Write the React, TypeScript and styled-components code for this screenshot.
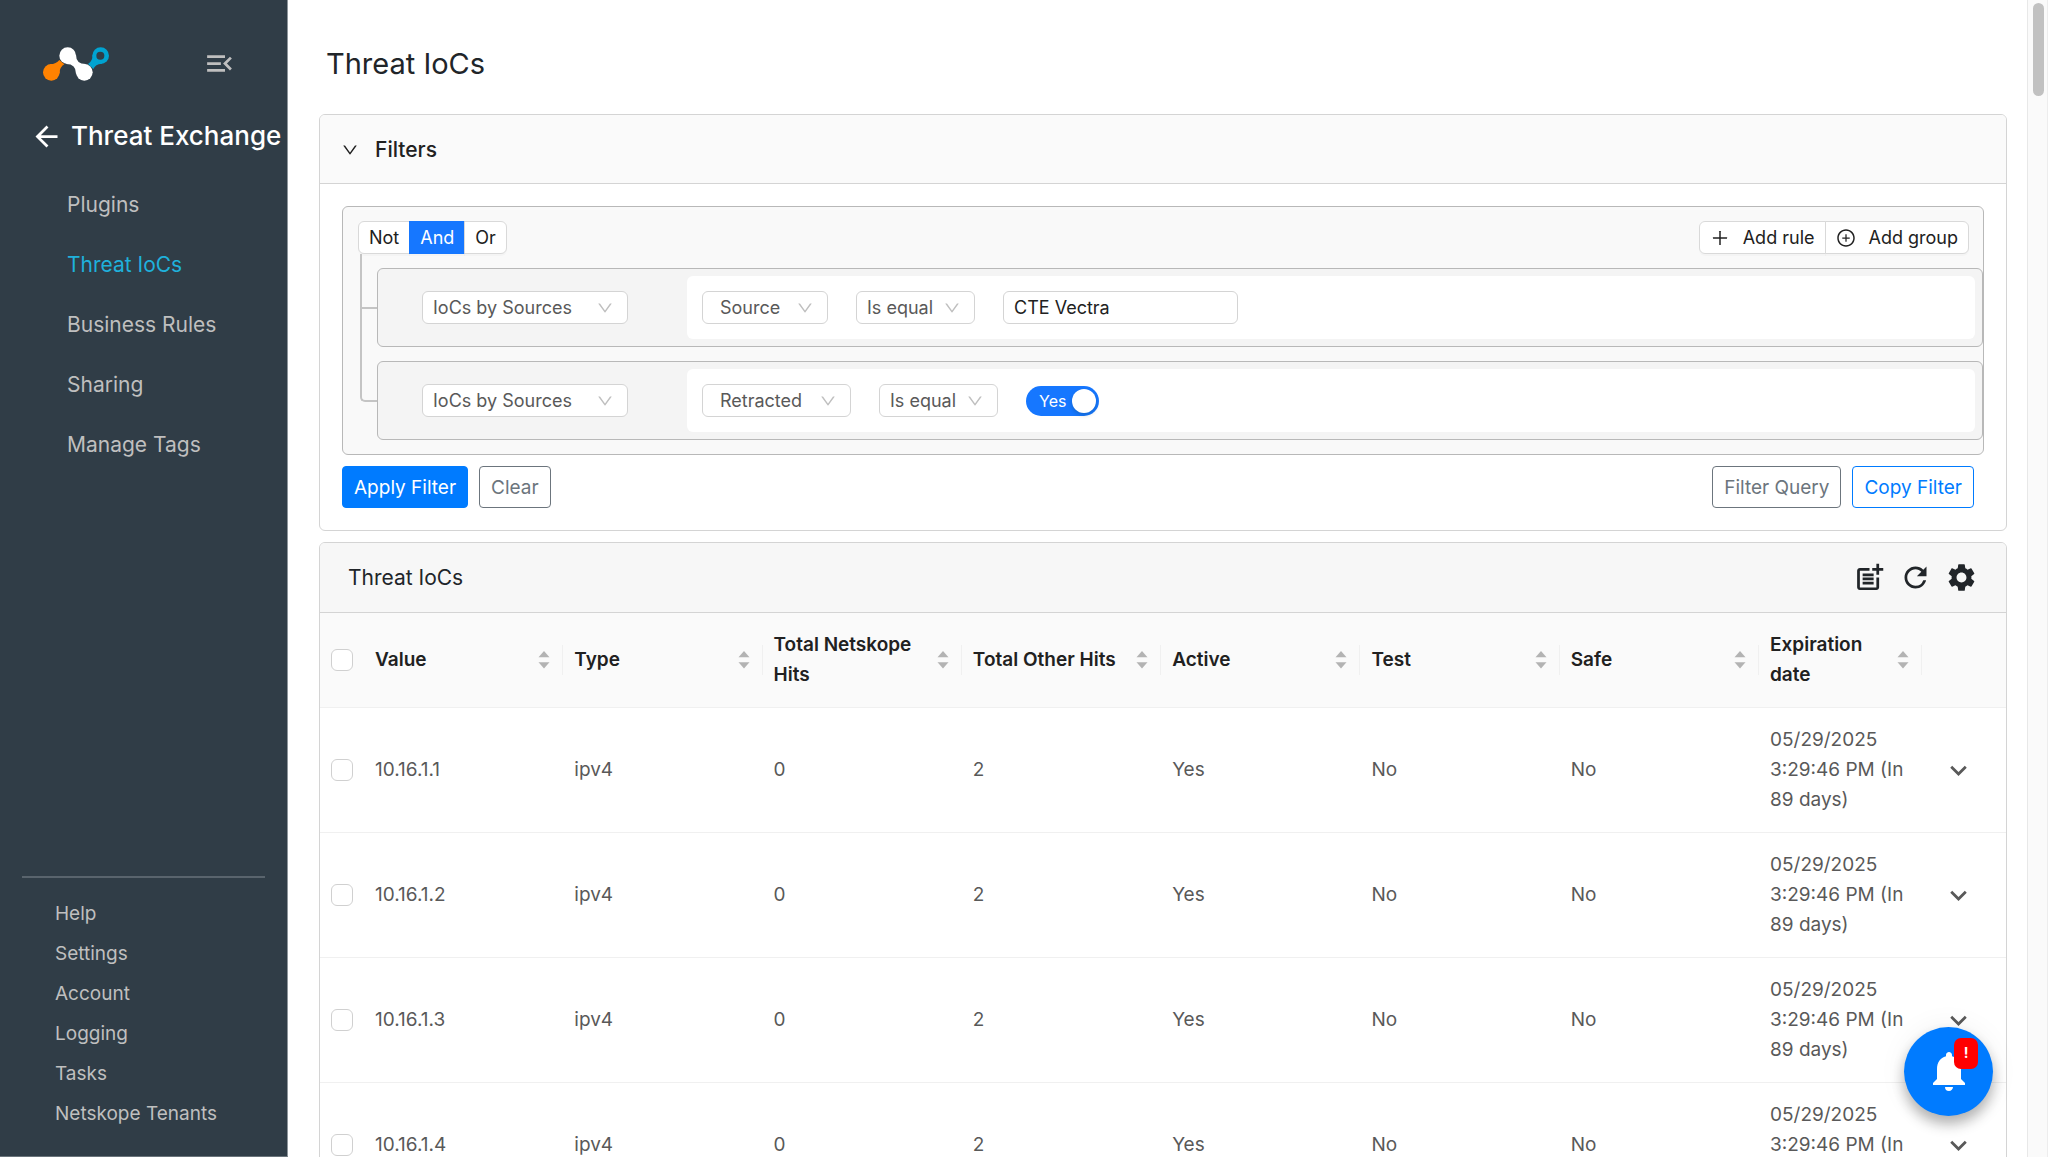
import React, { useState } from "react";
import styled, { createGlobalStyle } from "styled-components";
import {
  MdArrowBack,
  MdExpandMore,
  MdMenuOpen,
  MdNotifications,
  MdPostAdd,
  MdRefresh,
  MdSettings,
} from "react-icons/md";
import { AiOutlineDown, AiOutlinePlus, AiOutlinePlusCircle } from "react-icons/ai";

const GlobalStyle = createGlobalStyle`
  *, *::before, *::after { box-sizing: border-box; }
  body {
    margin: 0;
    background: #fff;
    color: #212529;
    font-family: Inter, "Liberation Sans", sans-serif;
    font-size: 19px;
    line-height: 30px;
  }
  button, input, select { font: inherit; color: inherit; margin: 0; }
  button { cursor: pointer; }
  svg { display: block; flex: none; }
`;

const Shell = styled.div`
  display: flex;
  height: 100vh;
  overflow: hidden;
`;

/* ---------- sidebar ---------- */

const Sidebar = styled.aside`
  display: flex;
  flex-direction: column;
  flex: none;
  width: 288px;
  background: #303d47;
  border-right: 1px solid #8d959b;
  border-bottom: 1px solid #6a747b;
  color: #bfbfbf;
`;

const Brand = styled.div`
  display: flex;
  align-items: flex-start;
  justify-content: space-between;
  padding: 47px 51px 0 43px;
`;

const IconButton = styled.button`
  display: flex;
  padding: 0;
  border: 0;
  background: none;
`;

const BackRow = styled.div`
  display: flex;
  align-items: center;
  gap: 8px;
  height: 40px;
  margin-top: 35px;
  padding-left: 30px;
  color: #fff;
  white-space: nowrap;
`;

const SectionName = styled.h2`
  margin: 0;
  font-size: 26px;
  font-weight: 500;
`;

const Nav = styled.nav`
  display: flex;
  flex-direction: column;
  margin-top: 19px;
`;

const NavLink = styled.a<{ $active?: boolean }>`
  display: flex;
  align-items: center;
  height: 60px;
  padding-left: 67px;
  font-size: 21px;
  text-decoration: none;
  color: ${(p) => (p.$active ? "#1fb1dc" : "#bfbfbf")};
`;

const FooterNav = styled.nav`
  display: flex;
  flex-direction: column;
  margin: auto 22px 22px;
  padding-top: 16px;
  border-top: 2px solid #59646d;
`;

const FooterLink = styled.a`
  display: flex;
  align-items: center;
  height: 40px;
  padding-left: 33px;
  text-decoration: none;
  color: #bfbfbf;
`;

/* ---------- main ---------- */

const Main = styled.main`
  flex: 1;
  min-width: 0;
  overflow-y: auto;
  scrollbar-width: none;
  padding: 44px 20px 0 31px;
`;

const ScrollTrack = styled.div`
  flex: none;
  width: 21px;
  padding: 3px 3px 3px 5px;
  background: #fafafa;
  border-left: 1px solid #e8e8e8;
  border-right: 1px solid #ededed;
`;

const ScrollThumb = styled.div`
  width: 11px;
  height: 93px;
  border-radius: 6px;
  background: #c1c1c1;
`;

const PageTitle = styled.h1`
  margin: 0 0 30px;
  padding-left: 7px;
  font-size: 29px;
  font-weight: 400;
  line-height: 40px;
`;

const Card = styled.section`
  margin-bottom: 11px;
  border: 1px solid #d4d4d4;
  border-radius: 6px;
  overflow: hidden;
`;

const CollapseHeader = styled.button`
  display: flex;
  align-items: center;
  gap: 16px;
  width: 100%;
  height: 69px;
  padding: 2px 21px 0;
  border: 0;
  border-bottom: 1px solid #d4d4d4;
  background: #fafafa;
  color: #212121;
  font-size: 21px;
  font-weight: 500;
`;

const CardBody = styled.div`
  padding: 22px;
`;

const Group = styled.div`
  border: 1px solid #b8b8b8;
  border-radius: 6px;
  background: #f9f9f9;
  padding: 14px 0 14px 15px;
  font-size: 18px;
`;

const GroupHeader = styled.div`
  display: flex;
  justify-content: space-between;
  padding-right: 14px;
`;

const Segment = styled.div`
  display: flex;
`;

const SegmentButton = styled.button<{ $active?: boolean }>`
  display: flex;
  align-items: center;
  gap: 13px;
  height: 33px;
  margin-right: -1px;
  padding: 0 10px;
  border: 1px solid ${(p) => (p.$active ? "#1677ff" : "#d9d9d9")};
  background: ${(p) => (p.$active ? "#1677ff" : "#fff")};
  color: ${(p) => (p.$active ? "#fff" : "#212121")};
  box-shadow: 0 2px 0 rgba(0, 0, 0, 0.02);
  &:first-child { border-radius: 6px 0 0 6px; }
  &:last-child { border-radius: 0 6px 6px 0; margin-right: 0; }
`;

const Rules = styled.div`
  display: flex;
  flex-direction: column;
  gap: 14px;
  margin-top: 14px;
  padding-left: 19px;
`;

const Rule = styled.div`
  position: relative;
  display: flex;
  padding: 7px;
  border: 1px solid #b8b8b8;
  border-radius: 6px;
  background: #f4f4f4;

  /* tree line that ties the rule to its conjunction */
  &::before {
    content: "";
    position: absolute;
    left: -18px;
    top: -55px;
    bottom: 37px;
    width: 17px;
    border: solid #c4c4c4;
    border-width: 0 0 2px 2px;
  }
  &:first-child::before { top: -15px; }
  &:last-child::before { border-bottom-left-radius: 5px; }
`;

const RuleField = styled.div`
  display: flex;
  align-items: center;
  flex: none;
  width: 302px;
  padding-left: 37px;
`;

const RuleBody = styled.div`
  display: flex;
  align-items: center;
  gap: 28px;
  flex: 1;
  height: 63px;
  padding: 0 15px;
  border-radius: 6px;
  background: #fff;
`;

const SelectBox = styled.span<{ $width: number }>`
  display: grid;
  align-items: center;
  width: ${(p) => p.$width}px;
  > * { grid-area: 1 / 1; }
  > svg {
    justify-self: end;
    margin-right: 14px;
    color: #bfbfbf;
    pointer-events: none;
  }
`;

const Select = styled.select<{ $indent: number }>`
  appearance: none;
  width: 100%;
  height: 33px;
  padding: 0 24px 0 ${(p) => p.$indent}px;
  border: 1px solid #d4d4d4;
  border-radius: 6px;
  background: #fff;
  color: #595959;
`;

const ValueInput = styled.input`
  width: 235px;
  height: 33px;
  padding: 0 10px;
  border: 1px solid #d4d4d4;
  border-radius: 6px;
  background: #fff;
  color: #212121;
`;

const SwitchLabel = styled.label`
  display: grid;
  align-items: center;
  width: 73px;
  > * { grid-area: 1 / 1; }
  span {
    padding-left: 13px;
    color: #fff;
    font-size: 16px;
    pointer-events: none;
  }
`;

const SwitchInput = styled.input`
  appearance: none;
  display: flex;
  align-items: center;
  width: 73px;
  height: 30px;
  padding: 0 3px;
  border-radius: 15px;
  background: #8c8c8c;
  cursor: pointer;
  &::before {
    content: "";
    width: 24px;
    height: 24px;
    border-radius: 50%;
    background: #fff;
    box-shadow: 0 2px 4px rgba(0, 35, 11, 0.2);
  }
  &:checked { background: #1677ff; justify-content: flex-end; }
`;

const Actions = styled.div`
  display: flex;
  justify-content: space-between;
  margin-top: 11px;
  padding-right: 10px;
`;

const ButtonPair = styled.div`
  display: flex;
  gap: 11px;
`;

const tones = {
  primary: { bg: "#007bff", fg: "#fff", line: "#007bff" },
  neutral: { bg: "#fff", fg: "#6c757d", line: "#6c757d" },
  outline: { bg: "#fff", fg: "#007bff", line: "#007bff" },
};

const Button = styled.button<{ $tone: keyof typeof tones }>`
  height: 42px;
  padding: 1px 11px 0;
  border: 1px solid ${(p) => tones[p.$tone].line};
  border-radius: 4px;
  background: ${(p) => tones[p.$tone].bg};
  color: ${(p) => tones[p.$tone].fg};
`;

/* ---------- table ---------- */

const TableHeader = styled.header`
  display: flex;
  align-items: center;
  justify-content: space-between;
  height: 70px;
  padding: 0 28px;
  border-bottom: 1px solid #d4d4d4;
  background: #f7f7f7;
`;

const TableTitle = styled.h2`
  margin: 0;
  font-size: 21px;
  font-weight: 400;
`;

const Tools = styled.div`
  display: flex;
  gap: 13px;
`;

const Table = styled.table`
  width: 100%;
  table-layout: fixed;
  border-collapse: separate;
  border-spacing: 0;
`;

const CheckCol = styled.col`
  width: 44px;
`;
const DateCol = styled.col`
  width: 163px;
`;
const ActionCol = styled.col`
  width: 84px;
`;

const HeadCell = styled.th`
  height: 95px;
  padding: 0 11px;
  border-bottom: 1px solid #f0f0f0;
  background: #fafafa;
  color: #212121;
  font-weight: 600;
  text-align: left;
`;

const SortCell = styled(HeadCell)`
  padding-right: 0;
`;

const SortLabel = styled.div`
  display: flex;
  align-items: center;
  justify-content: space-between;
  gap: 6px;
`;

const SortButton = styled(IconButton)`
  align-items: center;
  height: 30px;
  padding-right: 12px;
  border-right: 1px solid #f0f0f0;
  color: #b3b3b3;
`;

const Cell = styled.td`
  padding: 17px 11px;
  border-bottom: 1px solid #f0f0f0;
  color: #595959;
`;

const ExpandCell = styled(Cell)`
  padding-left: 20px;
`;

const Checkbox = styled.input`
  appearance: none;
  display: block;
  width: 22px;
  height: 22px;
  border: 1px solid #d0d0d0;
  border-radius: 6px;
  background: #fff;
  &:checked { background: #1677ff; border-color: #1677ff; }
`;

/* ---------- notification button ---------- */

const Fab = styled.button`
  position: fixed;
  right: 55px;
  bottom: 41px;
  display: grid;
  place-items: center;
  width: 89px;
  height: 89px;
  padding: 0 0 2px;
  border: 0;
  border-radius: 50%;
  background: #007bff;
  color: #fff;
  box-shadow: 0 8px 14px rgba(0, 0, 0, 0.3), 0 0 30px rgba(0, 0, 0, 0.06);
`;

const FabBadge = styled.span`
  position: absolute;
  top: 11px;
  right: 15px;
  width: 24px;
  height: 31px;
  border-radius: 7px;
  background: #ff0000;
  font-size: 14px;
  font-weight: 700;
`;

const Logo = () => (
  <svg width="66" height="34" viewBox="39 37 198 102" role="img" aria-label="Netskope">
    <g fill="#ff8200">
      <circle cx="64" cy="113" r="25" />
      <path d="M60 89Q79 88 88 76L103 89Q89 97 88 117L64 113Z" />
    </g>
    <g fill="#00a3d1">
      <path d="M188 60Q188 79 174 88L190 103Q196 88 215 87L226 66L204 50Z" />
      <circle cx="212" cy="63" r="25" />
    </g>
    <circle cx="211" cy="63" r="12" fill="#303d47" />
    <g fill="#fff">
      <circle cx="113" cy="63" r="25" />
      <circle cx="163" cy="113" r="25" />
      <path d="M138 60Q138 88 167 88L163 113L138 117Q138 88 109 88L113 63Z" />
    </g>
  </svg>
);

const SortIcon = () => (
  <svg width="12" height="18" viewBox="0 0 12 18" fill="currentColor" aria-hidden="true">
    <path d="M6 0L11.5 6.2H.5Z" />
    <path d="M.5 11.3H11.5L6 17.6Z" />
  </svg>
);

type DropdownProps = { label: string; value: string; width: number; indent?: number };

const Dropdown = ({ label, value, width, indent = 10 }: DropdownProps) => (
  <SelectBox $width={width}>
    <Select aria-label={label} $indent={indent} defaultValue={value}>
      <option>{value}</option>
    </Select>
    <AiOutlineDown size={18} aria-hidden="true" />
  </SelectBox>
);

const navItems = ["Plugins", "Threat IoCs", "Business Rules", "Sharing", "Manage Tags"];
const footerItems = ["Help", "Settings", "Account", "Logging", "Tasks", "Netskope Tenants"];
const columns = [
  "Value",
  "Type",
  "Total Netskope Hits",
  "Total Other Hits",
  "Active",
  "Test",
  "Safe",
  "Expiration date",
];
const rows = ["10.16.1.1", "10.16.1.2", "10.16.1.3", "10.16.1.4"].map((value) => [
  value,
  "ipv4",
  "0",
  "2",
  "Yes",
  "No",
  "No",
  "05/29/2025 3:29:46 PM (In 89 days)",
]);

export default function App() {
  const [retracted, setRetracted] = useState(true);
  const [conjunction, setConjunction] = useState("And");

  return (
    <>
      <GlobalStyle />
      <Shell>
        <Sidebar>
          <Brand>
            <Logo />
            <IconButton aria-label="Collapse menu">
              <MdMenuOpen size={33} color="#bfbfbf" />
            </IconButton>
          </Brand>
          <BackRow>
            <IconButton aria-label="Back">
              <MdArrowBack size={33} color="#fff" />
            </IconButton>
            <SectionName>Threat Exchange</SectionName>
          </BackRow>
          <Nav>
            {navItems.map((item) => (
              <NavLink key={item} href="#" $active={item === "Threat IoCs"}>
                {item}
              </NavLink>
            ))}
          </Nav>
          <FooterNav>
            {footerItems.map((item) => (
              <FooterLink key={item} href="#">
                {item}
              </FooterLink>
            ))}
          </FooterNav>
        </Sidebar>

        <Main>
          <PageTitle>Threat IoCs</PageTitle>

          <Card>
            <CollapseHeader aria-expanded="true">
              <AiOutlineDown size={18} />
              Filters
            </CollapseHeader>
            <CardBody>
              <Group>
                <GroupHeader>
                  <Segment>
                    {["Not", "And", "Or"].map((c) => (
                      <SegmentButton
                        key={c}
                        $active={c === conjunction}
                        onClick={() => setConjunction(c)}
                      >
                        {c}
                      </SegmentButton>
                    ))}
                  </Segment>
                  <Segment>
                    <SegmentButton>
                      <AiOutlinePlus size={20} />
                      Add rule
                    </SegmentButton>
                    <SegmentButton>
                      <AiOutlinePlusCircle size={20} />
                      Add group
                    </SegmentButton>
                  </Segment>
                </GroupHeader>
                <Rules>
                  <Rule>
                    <RuleField>
                      <Dropdown label="Rule type" value="IoCs by Sources" width={206} />
                    </RuleField>
                    <RuleBody>
                      <Dropdown label="Field" value="Source" width={126} indent={17} />
                      <Dropdown label="Operator" value="Is equal" width={119} />
                      <ValueInput aria-label="Value" defaultValue="CTE Vectra" />
                    </RuleBody>
                  </Rule>
                  <Rule>
                    <RuleField>
                      <Dropdown label="Rule type" value="IoCs by Sources" width={206} />
                    </RuleField>
                    <RuleBody>
                      <Dropdown label="Field" value="Retracted" width={149} indent={17} />
                      <Dropdown label="Operator" value="Is equal" width={119} />
                      <SwitchLabel>
                        <SwitchInput
                          type="checkbox"
                          role="switch"
                          checked={retracted}
                          onChange={(e) => setRetracted(e.target.checked)}
                        />
                        <span>{retracted ? "Yes" : "No"}</span>
                      </SwitchLabel>
                    </RuleBody>
                  </Rule>
                </Rules>
              </Group>
              <Actions>
                <ButtonPair>
                  <Button $tone="primary">Apply Filter</Button>
                  <Button $tone="neutral">Clear</Button>
                </ButtonPair>
                <ButtonPair>
                  <Button $tone="neutral">Filter Query</Button>
                  <Button $tone="outline">Copy Filter</Button>
                </ButtonPair>
              </Actions>
            </CardBody>
          </Card>

          <Card>
            <TableHeader>
              <TableTitle>Threat IoCs</TableTitle>
              <Tools>
                <IconButton aria-label="Add IoC">
                  <MdPostAdd size={33} />
                </IconButton>
                <IconButton aria-label="Refresh">
                  <MdRefresh size={33} />
                </IconButton>
                <IconButton aria-label="Table settings">
                  <MdSettings size={33} />
                </IconButton>
              </Tools>
            </TableHeader>
            <Table>
              <colgroup>
                <CheckCol />
                {columns.slice(0, -1).map((c) => (
                  <col key={c} />
                ))}
                <DateCol />
                <ActionCol />
              </colgroup>
              <thead>
                <tr>
                  <HeadCell>
                    <Checkbox type="checkbox" aria-label="Select all" />
                  </HeadCell>
                  {columns.map((c) => (
                    <SortCell key={c} scope="col">
                      <SortLabel>
                        {c}
                        <SortButton aria-label={`Sort by ${c}`}>
                          <SortIcon />
                        </SortButton>
                      </SortLabel>
                    </SortCell>
                  ))}
                  <HeadCell />
                </tr>
              </thead>
              <tbody>
                {rows.map((cells) => (
                  <tr key={cells[0]}>
                    <Cell>
                      <Checkbox type="checkbox" aria-label={`Select ${cells[0]}`} />
                    </Cell>
                    {cells.map((text, i) => (
                      <Cell key={columns[i]}>{text}</Cell>
                    ))}
                    <ExpandCell>
                      <IconButton aria-label={`Expand ${cells[0]}`}>
                        <MdExpandMore size={33} color="#595959" />
                      </IconButton>
                    </ExpandCell>
                  </tr>
                ))}
              </tbody>
            </Table>
          </Card>
        </Main>

        <ScrollTrack>
          <ScrollThumb />
        </ScrollTrack>
      </Shell>

      <Fab aria-label="Notifications">
        <MdNotifications size={48} />
        <FabBadge>!</FabBadge>
      </Fab>
    </>
  );
}
